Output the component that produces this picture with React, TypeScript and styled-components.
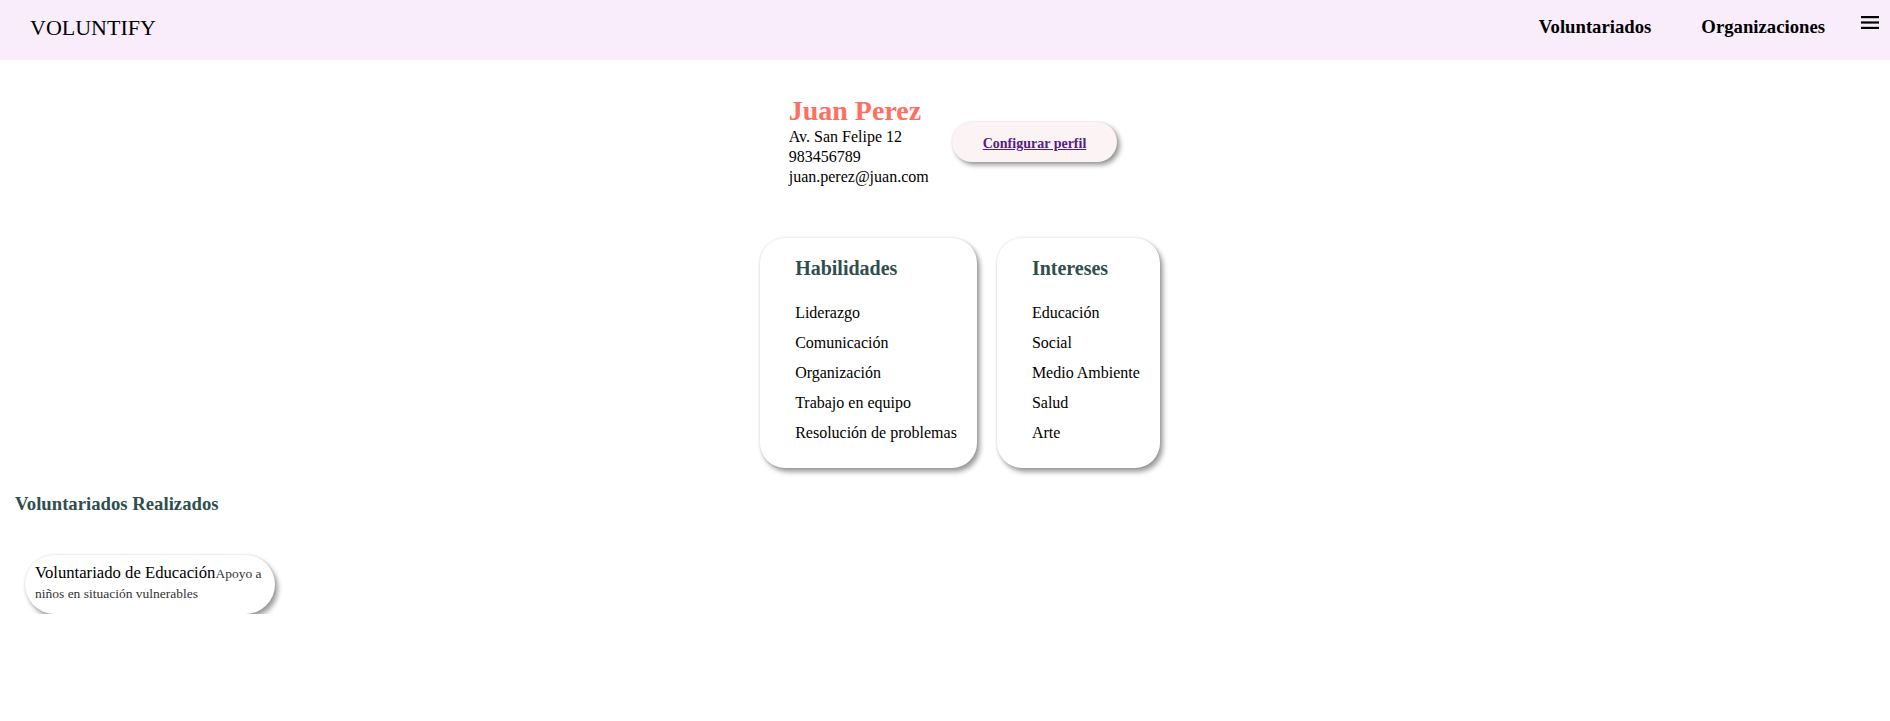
import React from "react";
import styled, { createGlobalStyle } from "styled-components";

const GlobalStyle = createGlobalStyle`
  html, body { margin: 0; padding: 0; background: #ffffff; }
  body { font-family: "Liberation Serif", "Times New Roman", serif; color: #000; }
  * { box-sizing: border-box; }
`;

const Header = styled.header`
  height: 60px;
  background: #faedfb;
  display: flex;
  align-items: flex-start;
  justify-content: space-between;
`;

const Logo = styled.div`
  margin: 15px 0 0 30px;
  font-size: 22px;
  line-height: 26px;
`;

const Nav = styled.nav`
  display: flex;
  align-items: flex-start;
`;

const NavLink = styled.a<{ $first?: boolean }>`
  margin-top: 16px;
  margin-left: ${(p) => (p.$first ? "0" : "50px")};
  font-size: 18.72px;
  line-height: 22px;
  font-weight: bold;
  color: #000;
  text-decoration: none;
`;

const MenuButton = styled.button`
  margin: 16px 11px 0 36px;
  padding: 0;
  border: 0;
  background: transparent;
  width: 18px;
  height: 13px;
  display: block;
`;

const ProfileRow = styled.section`
  display: flex;
  justify-content: center;
  align-items: flex-start;
  gap: 23px;
  padding-left: 16px;
  margin-top: 34px;
`;

const Info = styled.div`
  display: flex;
  flex-direction: column;
`;

const Name = styled.h2`
  margin: 0;
  font-size: 28px;
  line-height: 33px;
  font-weight: bold;
  color: #ff6f61;
`;

const InfoLine = styled.p`
  margin: 0;
  font-size: 16px;
  line-height: 20px;
`;

const ConfigButton = styled.div`
  margin-top: 28px;
  height: 40px;
  padding: 0 31px;
  border-radius: 20px;
  background: #fcf4f4;
  box-shadow: 0 0 2px rgba(0, 0, 0, 0.12), 3px 3px 5px rgba(0, 0, 0, 0.4);
  display: flex;
  align-items: center;
`;

const ConfigLink = styled.a`
  font-size: 14px;
  font-weight: bold;
  color: #551a8b;
  text-decoration: underline;
  line-height: 16px;
  padding-top: 3px;
`;

const CardsRow = styled.section`
  display: flex;
  justify-content: center;
  align-items: flex-start;
  gap: 20px;
  padding-left: 30px;
  margin-top: 51px;
`;

const Card = styled.div`
  background: #fff;
  border-radius: 25px;
  padding: 18px 20px 20px 35px;
  box-shadow: 0 0 3px rgba(0, 0, 0, 0.14), 3px 4px 5px rgba(0, 0, 0, 0.38);
`;

const CardTitle = styled.h3`
  margin: 0 0 18px 0;
  font-size: 20px;
  line-height: 24px;
  font-weight: bold;
  color: #2f4f4f;
`;

const List = styled.ul`
  margin: 0;
  padding: 0;
  list-style: none;
`;

const Item = styled.li`
  font-size: 16px;
  line-height: 30px;
  white-space: nowrap;
`;

const Done = styled.section`
  padding-left: 15px;
  margin-top: 25px;
`;

const SectionTitle = styled.h3`
  margin: 0;
  font-size: 18.72px;
  line-height: 22px;
  font-weight: bold;
  color: #2f4f4f;
`;

const DoneList = styled.div`
  display: flex;
  flex-wrap: wrap;
  gap: 20px;
  margin-top: 40px;
  padding-left: 10px;
`;

const VolCard = styled.div`
  width: 250px;
  border-radius: 30px;
  padding: 8px 10px 10px 10px;
  background: #fff;
  font-size: 13.5px;
  line-height: 20px;
  box-shadow: 0 0 3px rgba(0, 0, 0, 0.14), 3px 4px 5px rgba(0, 0, 0, 0.38);
`;

const VolTitle = styled.span`
  font-size: 16.7px;
  line-height: 20px;
  color: #000;
`;

const VolDesc = styled.span`
  font-size: 13.5px;
  line-height: 20px;
  color: #333;
`;

const habilidades = [
  "Liderazgo",
  "Comunicación",
  "Organización",
  "Trabajo en equipo",
  "Resolución de problemas",
];

const intereses = ["Educación", "Social", "Medio Ambiente", "Salud", "Arte"];

export default function App() {
  return (
    <>
      <GlobalStyle />
      <Header>
        <Logo>VOLUNTIFY</Logo>
        <Nav>
          <NavLink $first href="#">Voluntariados</NavLink>
          <NavLink href="#">Organizaciones</NavLink>
          <MenuButton aria-label="menu">
            <svg width="18" height="13" viewBox="0 0 18 13">
              <rect x="0" y="0" width="18" height="2.2" fill="#000" />
              <rect x="0" y="5.4" width="18" height="2.2" fill="#000" />
              <rect x="0" y="10.8" width="18" height="2.2" fill="#000" />
            </svg>
          </MenuButton>
        </Nav>
      </Header>

      <ProfileRow>
        <Info>
          <Name>Juan Perez</Name>
          <InfoLine>Av. San Felipe 12</InfoLine>
          <InfoLine>983456789</InfoLine>
          <InfoLine>juan.perez@juan.com</InfoLine>
        </Info>
        <ConfigButton>
          <ConfigLink href="#">Configurar perfil</ConfigLink>
        </ConfigButton>
      </ProfileRow>

      <CardsRow>
        <Card>
          <CardTitle>Habilidades</CardTitle>
          <List>
            {habilidades.map((h) => (
              <Item key={h}>{h}</Item>
            ))}
          </List>
        </Card>
        <Card>
          <CardTitle>Intereses</CardTitle>
          <List>
            {intereses.map((h) => (
              <Item key={h}>{h}</Item>
            ))}
          </List>
        </Card>
      </CardsRow>

      <Done>
        <SectionTitle>Voluntariados Realizados</SectionTitle>
        <DoneList>
          <VolCard>
            <VolTitle>Voluntariado de Educación</VolTitle>
            <VolDesc>Apoyo a niños en situación vulnerables</VolDesc>
          </VolCard>
        </DoneList>
      </Done>
    </>
  );
}
